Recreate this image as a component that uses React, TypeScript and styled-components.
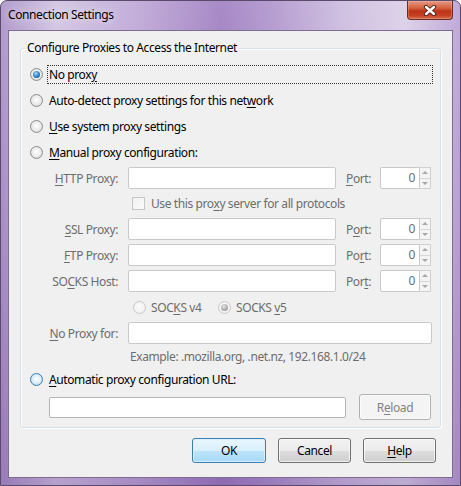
import React from 'react';
import styled, { createGlobalStyle } from 'styled-components';

const GlobalStyle = createGlobalStyle`
  html, body { margin: 0; padding: 0; background: #ffffff; }
  body {
    font-family: "Segoe UI", "Noto Sans", "Open Sans", sans-serif;
    font-size: 12px;
    letter-spacing: -0.4px;
    color: #000;
  }
  u { text-underline-offset: 2px; }
`;

const Frame = styled.div`
  width: 461px;
  height: 486px;
  box-sizing: border-box;
  border: 1px solid #5a4a6c;
  border-radius: 7px 7px 0 0;
  background:
    linear-gradient(180deg, rgba(255,255,255,0.12) 0%, rgba(255,255,255,0) 40%, rgba(90,50,130,0.22) 100%),
    linear-gradient(90deg, #a98fc7 0%, #cfc1e0 12%, #bba3d5 30%, #9c7bbf 48%, #ab8fca 58%, #cbbade 75%, #d8cde6 88%, #b9a0d3 100%);
  display: flex;
  flex-direction: column;
  padding: 0 7px 7px 7px;
  overflow: hidden;
`;

const TitleBar = styled.div`
  height: 29px;
  display: flex;
  align-items: flex-start;
  justify-content: space-between;
  flex-shrink: 0;
`;

const Title = styled.div`
  line-height: 28px;
  font-size: 12px;
  color: #000;
  text-shadow: 0 0 8px rgba(255,255,255,0.9);
`;

const CloseButton = styled.div`
  width: 46px;
  height: 19px;
  box-sizing: border-box;
  border: 1px solid #6b2d22;
  border-top: none;
  border-radius: 0 0 4px 4px;
  background: linear-gradient(180deg, #e39a86 0%, #d4603f 40%, #bd3417 55%, #c43f22 80%, #d86e50 100%);
  box-shadow: inset 0 0 0 1px rgba(255,200,180,0.3);
  display: flex;
  align-items: center;
  justify-content: center;
`;

const Client = styled.div`
  flex: 1;
  background: #f0f0f0;
  border: 1px solid #7d6c90;
  display: flex;
  flex-direction: column;
`;

const Group = styled.fieldset`
  margin: 9px 11px 0 11px;
  padding: 7px 0 7px 9px;
  border: 1px solid #d5dfe5;
  border-radius: 3px;
  box-shadow: inset 1px 1px 0 #ffffff, 1px 1px 0 #ffffff;
  min-width: 0;
  display: flex;
  flex-direction: column;
  gap: 4px;
`;

const Legend = styled.legend`
  margin-left: -5px;
  padding: 0 2px;
  line-height: 16px;
`;

const Row = styled.div`
  height: 22px;
  display: flex;
  align-items: center;
  gap: 5px;
`;

const RowLabel = styled.span<{ $focus?: boolean }>`
  line-height: 17px;
  padding: 0 1px;
  ${p => (p.$focus ? 'flex: 0 0 382px; outline: 1px dotted #333; outline-offset: 0;' : '')}
`;

const RadioDot = styled.span<{ $checked?: boolean; $disabled?: boolean; $hot?: boolean }>`
  width: 13px;
  height: 13px;
  box-sizing: border-box;
  border-radius: 50%;
  flex-shrink: 0;
  display: inline-flex;
  align-items: center;
  justify-content: center;
  border: 1px solid ${p => (p.$disabled ? '#c9c9c9' : p.$hot ? '#3c7fb1' : '#8f8f8f')};
  background: ${p => p.$hot
    ? 'radial-gradient(circle at 50% 45%, #ffffff 0%, #dff0fc 45%, #9fcdf0 100%)'
    : p.$disabled
      ? 'radial-gradient(circle at 50% 45%, #fbfbfb 0%, #eeeeee 100%)'
      : 'radial-gradient(circle at 50% 45%, #ffffff 0%, #ececec 50%, #c9c9c9 100%)'};
  &::after {
    content: '';
    display: ${p => (p.$checked ? 'block' : 'none')};
    width: 7px;
    height: 7px;
    border-radius: 50%;
    background: ${p => p.$disabled
      ? 'radial-gradient(circle at 40% 35%, #e6e6e6 0%, #a9a9a9 60%, #8a8a8a 100%)'
      : 'radial-gradient(circle at 40% 35%, #9fdcff 0%, #2d7cc0 55%, #16508a 100%)'};
  }
`;

const ManualGrid = styled.div`
  display: grid;
  grid-template-columns: 89px 208px 24px 51px;
  grid-template-rows: 22px 21px repeat(5, 22px) 16px;
  column-gap: 10px;
  row-gap: 4px;
  margin-left: -1px;
  color: #6d6d6d;
`;

const FieldLabel = styled.span`
  text-align: right;
  align-self: center;
  white-space: nowrap;
`;

const PortLabel = styled.span`
  align-self: center;
`;

const TextBox = styled.div<{ $span?: boolean }>`
  box-sizing: border-box;
  background: #ffffff;
  border: 1px solid #c9c9c9;
  border-radius: 2px;
  height: 22px;
  ${p => (p.$span ? 'grid-column: 2 / 5; margin-right: -1px;' : '')}
`;

const Spin = styled.div`
  display: flex;
  height: 22px;
`;

const SpinBox = styled.div`
  flex: 1;
  box-sizing: border-box;
  background: #ffffff;
  border: 1px solid #c9c9c9;
  border-radius: 2px 0 0 2px;
  text-align: right;
  padding-right: 4px;
  line-height: 20px;
  color: #6d6d6d;
`;

const SpinArrows = styled.div`
  width: 11px;
  display: flex;
  flex-direction: column;
  box-sizing: border-box;
  border: 1px solid #d0d0d0;
  border-left: none;
  background: #f4f4f4;
`;

const Arrow = styled.div<{ $down?: boolean }>`
  flex: 1;
  display: flex;
  align-items: center;
  justify-content: center;
  ${p => (p.$down ? 'border-top: 1px solid #d6d6d6;' : '')}
  &::after {
    content: '';
    width: 0;
    height: 0;
    border-left: 3px solid transparent;
    border-right: 3px solid transparent;
    ${p => (p.$down ? 'border-top: 3px solid #a8a8a8;' : 'border-bottom: 3px solid #a8a8a8;')}
  }
`;

const SubRow = styled.div<{ $pad: number }>`
  grid-column: 2 / 5;
  display: flex;
  align-items: center;
  padding-left: ${p => p.$pad}px;
`;

const CheckBox = styled.span`
  width: 13px;
  height: 13px;
  box-sizing: border-box;
  border: 1px solid #c6c6c6;
  background: linear-gradient(135deg, #f0f0f0, #fbfbfb);
  margin-right: 6px;
  flex-shrink: 0;
`;

const SocksItem = styled.span<{ $w?: number }>`
  display: flex;
  align-items: center;
  gap: 5px;
  ${p => (p.$w ? `width: ${p.$w}px;` : '')}
`;

const Example = styled.div`
  grid-column: 2 / 5;
  padding-left: 2px;
  align-self: center;
`;

const UrlRow = styled.div`
  height: 26px;
  display: flex;
  align-items: center;
  gap: 13px;
  padding-left: 19px;
`;

const UrlBox = styled.div`
  width: 297px;
  height: 21px;
  box-sizing: border-box;
  background: #ffffff;
  border: 1px solid #b5b5b5;
  border-radius: 2px;
`;

const Button = styled.div<{ $w: number; $default?: boolean; $disabled?: boolean }>`
  width: ${p => p.$w}px;
  height: ${p => (p.$disabled ? 26 : 25)}px;
  box-sizing: border-box;
  border-radius: 3px;
  display: flex;
  align-items: center;
  justify-content: center;
  color: ${p => (p.$disabled ? '#838383' : '#000')};
  border: 1px solid ${p => (p.$disabled ? '#adb2b5' : p.$default ? '#3c7fb1' : '#707070')};
  background: ${p => p.$disabled
    ? '#f4f4f4'
    : p.$default
      ? 'linear-gradient(180deg, #eaf6fd 0%, #d9f0fc 50%, #bee6fd 51%, #a7d9f5 100%)'
      : 'linear-gradient(180deg, #f2f2f2 0%, #ebebeb 50%, #dddddd 51%, #cfcfcf 100%)'};
  box-shadow: inset 0 0 0 1px ${p => (p.$default ? 'rgba(220,240,255,0.9)' : 'rgba(255,255,255,0.7)')};
`;

const ButtonBar = styled.div`
  display: flex;
  justify-content: flex-end;
  gap: 12px;
  padding: 10px 16px 0 0;
`;

function PortSpin() {
  return (
    <Spin>
      <SpinBox>0</SpinBox>
      <SpinArrows>
        <Arrow />
        <Arrow $down />
      </SpinArrows>
    </Spin>
  );
}

const proxies = [
  { label: <><u>H</u>TTP Proxy:</>, port: <><u>P</u>ort:</> },
  { label: <><u>S</u>SL Proxy:</>, port: <>P<u>o</u>rt:</> },
  { label: <><u>F</u>TP Proxy:</>, port: <>Po<u>r</u>t:</> },
  { label: <>SO<u>C</u>KS Host:</>, port: <>Por<u>t</u>:</> },
];

export default function App() {
  return (
    <>
      <GlobalStyle />
      <Frame>
        <TitleBar>
          <Title>Connection Settings</Title>
          <CloseButton>
            <svg width="14" height="11" viewBox="0 0 14 11">
              <path d="M3 2 L11 9 M11 2 L3 9" stroke="#4a1d14" strokeWidth="4.2" strokeLinecap="round" />
              <path d="M3 2 L11 9 M11 2 L3 9" stroke="#ffffff" strokeWidth="2.4" strokeLinecap="round" />
            </svg>
          </CloseButton>
        </TitleBar>
        <Client>
          <Group>
            <Legend>Configure Proxies to Access the Internet</Legend>
            <Row>
              <RadioDot $checked />
              <RowLabel $focus>No prox<u>y</u></RowLabel>
            </Row>
            <Row>
              <RadioDot />
              <RowLabel>Auto-detect proxy settings for this net<u>w</u>ork</RowLabel>
            </Row>
            <Row>
              <RadioDot />
              <RowLabel><u>U</u>se system proxy settings</RowLabel>
            </Row>
            <Row>
              <RadioDot />
              <RowLabel><u>M</u>anual proxy configuration:</RowLabel>
            </Row>
            <ManualGrid>
              {proxies.map((p, i) => (
                <React.Fragment key={i}>
                  <FieldLabel>{p.label}</FieldLabel>
                  <TextBox />
                  <PortLabel>{p.port}</PortLabel>
                  <PortSpin />
                  {i === 0 && (
                    <SubRow $pad={4}>
                      <CheckBox />
                      <span>Use this pro<u>x</u>y server for all protocols</span>
                    </SubRow>
                  )}
                </React.Fragment>
              ))}
              <SubRow $pad={5}>
                <SocksItem $w={85}>
                  <RadioDot $disabled />
                  <span>SOC<u>K</u>S v4</span>
                </SocksItem>
                <SocksItem>
                  <RadioDot $disabled $checked />
                  <span>SOCKS <u>v</u>5</span>
                </SocksItem>
              </SubRow>
              <FieldLabel><u>N</u>o Proxy for:</FieldLabel>
              <TextBox $span />
              <Example>Example: .mozilla.org, .net.nz, 192.168.1.0/24</Example>
            </ManualGrid>
            <Row>
              <RadioDot $hot />
              <RowLabel><u>A</u>utomatic proxy configuration URL:</RowLabel>
            </Row>
            <UrlRow>
              <UrlBox />
              <Button $w={72} $disabled>R<u>e</u>load</Button>
            </UrlRow>
          </Group>
          <ButtonBar>
            <Button $w={74} $default>OK</Button>
            <Button $w={73}>Cancel</Button>
            <Button $w={73}><u>H</u>elp</Button>
          </ButtonBar>
        </Client>
      </Frame>
    </>
  );
}
